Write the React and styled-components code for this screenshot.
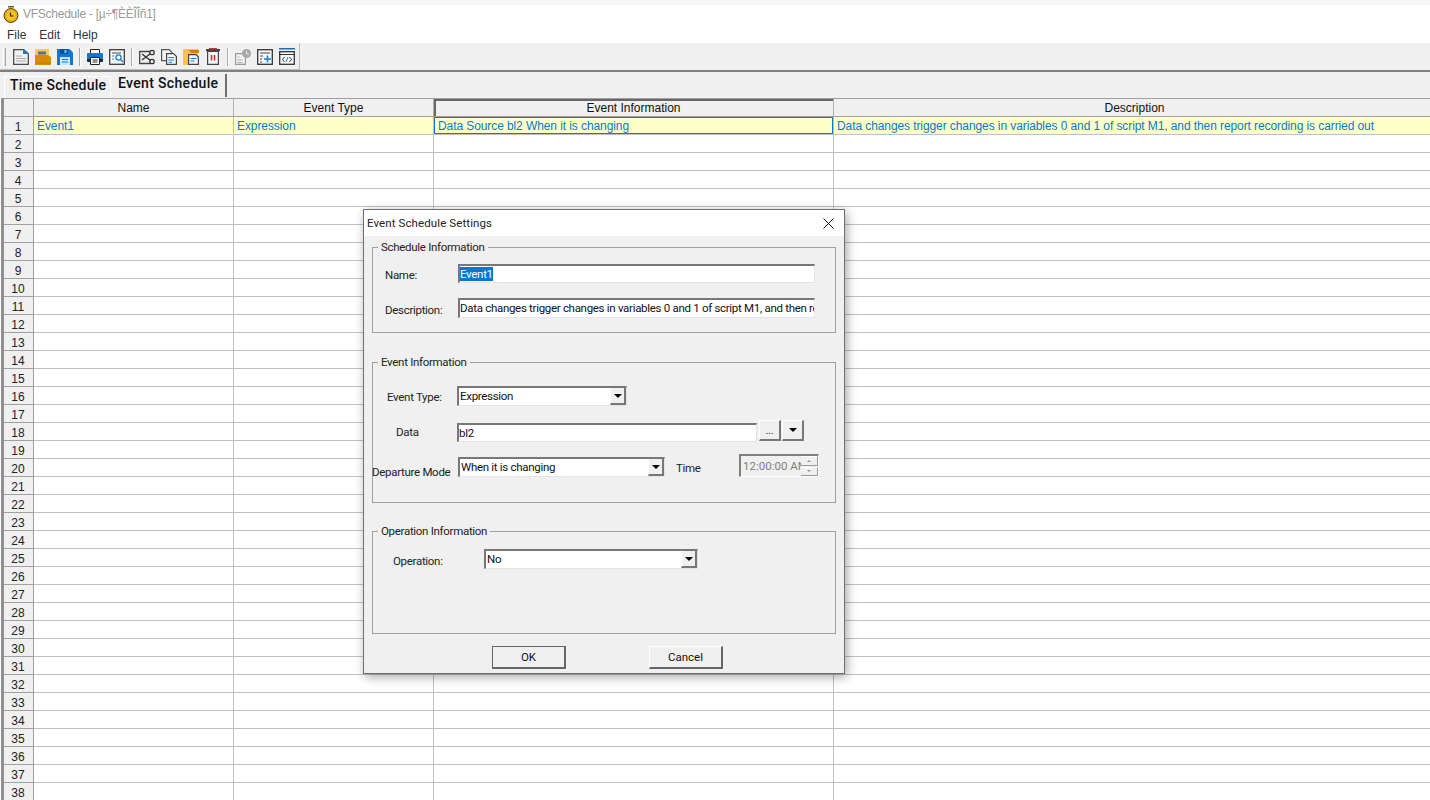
import React from 'react';
import styled, { createGlobalStyle } from 'styled-components';

const GlobalStyle = createGlobalStyle`
  html, body {
    margin: 0;
    padding: 0;
    background: #fff;
    overflow: hidden;
  }
  * {
    box-sizing: border-box;
  }
`;

const rows = Array.from({ length: 38 }, (_, i) => i + 1);

const firstRow = {
  name: 'Event1',
  type: 'Expression',
  info: 'Data Source bl2 When it is changing',
  description: 'Data changes trigger changes in variables 0 and 1 of script M1, and then report recording is carried out',
};

const AppClock = () => (
  <svg width="16" height="17" viewBox="0 0 16 17">
    <rect x="5" y="0" width="6" height="1.5" fill="#6b5a1e" />
    <circle cx="8" cy="9.5" r="7" fill="#e8a80c" stroke="#5a4a18" />
    <circle cx="8" cy="9.5" r="4.8" fill="#f6c52c" />
    <path d="M7.5 6.5v3.5h3" fill="none" stroke="#2b2b2b" strokeWidth="1.2" />
  </svg>
);

const NewIcon = () => (
  <svg width="16" height="17" viewBox="0 0 16 17">
    <path d="M.7 1.700h10l4.600 4v10.600H.7z" fill="#f2f2f2" stroke="#4a4a4a" strokeWidth="1.300" />
    <path d="M10 1l6 5h-6z" fill="#1a7fd0" />
    <path d="M3 8h6M3 10.500h10M3 13h10" stroke="#a8a8a8" strokeWidth="1.200" />
  </svg>
);

const OpenIcon = () => (
  <svg width="16" height="17" viewBox="0 0 16 17">
    <path d="M0 1h14v6H0z" fill="#f5cb55" />
    <rect x="3" y="3.500" width="8" height="3" fill="#4f7392" />
    <path d="M0 7h13l3 2v8H0z" fill="#d88a08" />
    <path d="M1 15h14" stroke="#c67a05" />
  </svg>
);

const SaveIcon = () => (
  <svg width="16" height="17" viewBox="0 0 16 17">
    <path d="M0 1h12.500L16 4.500V17H0z" fill="#0c78d8" />
    <rect x="3" y="1" width="8" height="5" fill="#0a4f94" />
    <rect x="7.500" y="2" width="2" height="3" fill="#8cc4f0" />
    <rect x="3" y="9" width="10" height="8" fill="#cfe4f6" />
    <path d="M5 11.500h6M5 14h6" stroke="#0c78d8" />
  </svg>
);

const PrintIcon = () => (
  <svg width="16" height="17" viewBox="0 0 16 17">
    <path d="M3.500 5.500V1.500h9v4" fill="#fff" stroke="#222" />
    <path d="M0 6a1 1 0 0 1 1-1h14a1 1 0 0 1 1 1v5H0z" fill="#0c78d8" />
    <path d="M0 11h16v2a1 1 0 0 1-1 1H1a1 1 0 0 1-1-1z" fill="#1c2a36" />
    <path d="M3.500 9.500h9v7h-9z" fill="#fff" stroke="#222" />
    <path d="M5.500 12h5M5.500 14h5" stroke="#222" />
  </svg>
);

const PreviewIcon = () => (
  <svg width="16" height="17" viewBox="0 0 16 17">
    <rect x=".7" y="1.700" width="14.600" height="14.600" fill="#f8f8f8" stroke="#3c3c3c" strokeWidth="1.300" />
    <path d="M3 5h9" stroke="#444" />
    <path d="M3 8h2M3 11h2" stroke="#2b8ad8" />
    <circle cx="9.500" cy="9.500" r="2.600" fill="#fff" stroke="#1a7fd0" strokeWidth="1.300" />
    <path d="M11.500 11.500l2.500 2.500" stroke="#1a7fd0" strokeWidth="1.500" />
  </svg>
);

const CutIcon = () => (
  <svg width="16" height="17" viewBox="0 0 16 17">
    <path d="M11 3.500H.7v12H11" fill="none" stroke="#444" strokeWidth="1.300" />
    <circle cx="13" cy="4.500" r="2.200" fill="#f0f0f0" stroke="#333" strokeWidth="1.300" />
    <circle cx="13" cy="13.500" r="2.200" fill="#f0f0f0" stroke="#333" strokeWidth="1.300" />
    <path d="M11.200 5.800L3 12M11.200 12.200L3 6" stroke="#333" strokeWidth="1.400" />
  </svg>
);

const CopyIcon = () => (
  <svg width="16" height="17" viewBox="0 0 16 17">
    <path d="M.6 1.600h7.500l3 3v8H.6z" fill="#f4f4f4" stroke="#555" strokeWidth="1.200" />
    <path d="M5.600 5.600h6.900l2.900 2.900v7.900H5.600z" fill="#fafafa" stroke="#444" strokeWidth="1.200" />
    <path d="M7.500 9.500h5.500M7.500 12h5.500M7.500 14.200h3.500" stroke="#1a7fd0" />
  </svg>
);

const PasteIcon = () => (
  <svg width="16" height="17" viewBox="0 0 16 17">
    <path d="M0 1h15v16H0z" fill="#f8c53a" />
    <path d="M6 2h10v3H8z" fill="#d57f14" />
    <path d="M5.600 6.600h7.400l2.400 2.400v7.400H5.600z" fill="#f8f8f8" stroke="#444" strokeWidth="1.200" />
    <path d="M7.500 10.500h6M7.500 13h4" stroke="#1a7fd0" />
  </svg>
);

const DeleteIcon = () => (
  <svg width="16" height="17" viewBox="0 0 16 17">
    <rect x="1" y="1" width="14" height="2.200" fill="#444" />
    <rect x="4" y="0" width="8" height="1.400" fill="#c23b3b" />
    <path d="M2.600 3.500h10.800v12.900H2.600z" fill="#f6f6f6" stroke="#444" strokeWidth="1.200" />
    <path d="M6.500 7v5.500M9.500 7v5.500" stroke="#c42b2b" strokeWidth="1.500" />
  </svg>
);

const ScheduleIcon = () => (
  <svg width="16" height="17" viewBox="0 0 16 17">
    <path d="M.6 5.600h9.800v10.800H.6z" fill="#f4f4f4" stroke="#999" strokeWidth="1.200" />
    <path d="M2.500 9h2M2.500 12h5M2.500 14.500h5" stroke="#aaa" />
    <circle cx="11.500" cy="5.500" r="4.500" fill="#a6a6a6" />
    <path d="M11.500 3v3h2.500" fill="none" stroke="#eee" />
  </svg>
);

const AddIcon = () => (
  <svg width="16" height="17" viewBox="0 0 16 17">
    <rect x=".7" y="1.700" width="14.600" height="14.600" fill="#f8f8f8" stroke="#333" strokeWidth="1.300" />
    <path d="M3 5h10M3 8h3M3 11h2M3 14h2" stroke="#444" />
    <path d="M7 11h7M10.500 7.500v7" stroke="#1a7fd0" strokeWidth="1.600" />
  </svg>
);

const CodeIcon = () => (
  <svg width="16" height="17" viewBox="0 0 16 17">
    <rect x="0" y="0" width="16" height="1.500" fill="#1a6fc0" />
    <rect x=".7" y="3.700" width="14.600" height="12.600" fill="#f8f8f8" stroke="#333" strokeWidth="1.300" />
    <path d="M.5 6.500h15" stroke="#333" />
    <path d="M5.500 9L3.500 11.500l2 2.500M10.500 9l2 2.500-2 2.500" fill="none" stroke="#333" />
    <path d="M9 9L7 14" stroke="#1a7fd0" />
  </svg>
);

const Arrow = () => <ArrowGlyph />;

const App = () => (
  <Page>
    <GlobalStyle />
    <TitleBar>
      <AppClock />
      <TitleText>VFSchedule - [µ÷¶ÈÈÎÎñ1]</TitleText>
    </TitleBar>
    <MenuBar>
      <MenuItem>File</MenuItem>
      <MenuItem>Edit</MenuItem>
      <MenuItem>Help</MenuItem>
    </MenuBar>
    <ToolbarStrip>
      <Toolbar>
        <Gripper />
        <ToolGroup>
          <NewIcon />
          <OpenIcon />
          <SaveIcon />
        </ToolGroup>
        <ToolSep />
        <ToolGroup>
          <PrintIcon />
          <PreviewIcon />
        </ToolGroup>
        <ToolSep />
        <ToolGroup>
          <CutIcon />
          <CopyIcon />
          <PasteIcon />
          <DeleteIcon />
        </ToolGroup>
        <ToolSep />
        <ToolGroup>
          <ScheduleIcon />
          <AddIcon />
          <CodeIcon />
        </ToolGroup>
      </Toolbar>
    </ToolbarStrip>
    <TabStrip>
      <Tab>Time Schedule</Tab>
      <Tab $active>Event Schedule</Tab>
    </TabStrip>
    <Sheet>
      <HeaderRow>
        <Corner />
        <HeaderCell>Name</HeaderCell>
        <HeaderCell>Event Type</HeaderCell>
        <HeaderCell $current>Event Information</HeaderCell>
        <HeaderCell>Description</HeaderCell>
      </HeaderRow>
      {rows.map((n) => {
        const data = n === 1 ? firstRow : {};
        return (
          <DataRow key={n}>
            <RowNumber>{n}</RowNumber>
            <Cell $filled={n === 1}>{data.name}</Cell>
            <Cell $filled={n === 1}>{data.type}</Cell>
            <Cell $filled={n === 1} $focused={n === 1}>{data.info}</Cell>
            <Cell $filled={n === 1}>{data.description}</Cell>
          </DataRow>
        );
      })}
    </Sheet>

    <Dialog>
      <DialogTitle>
        <span>Event Schedule Settings</span>
        <CloseIcon width="11" height="11" viewBox="0 0 11 11">
          <path d="M.5.5l10 10M10.500.5l-10 10" stroke="#111" strokeWidth="1" />
        </CloseIcon>
      </DialogTitle>
      <DialogBody>
        <Group $height={93} $gap={4}>
          <Legend>Schedule Information</Legend>
          <FormRow $top={10} $height={19}>
            <Label $left={12} $width={73} $down={1}>Name:</Label>
            <TextBox $width={357}><Selected>Event1</Selected></TextBox>
          </FormRow>
          <FormRow $top={15} $height={20}>
            <Label $left={12} $width={73} $down={2}>Description:</Label>
            <TextBox $width={357}>Data changes trigger changes in variables 0 and 1 of script M1, and then report recording is carried out</TextBox>
          </FormRow>
        </Group>

        <Group $height={148} $gap={22}>
          <Legend>Event Information</Legend>
          <FormRow $top={17} $height={20}>
            <Label $left={14} $width={70} $down={1}>Event Type:</Label>
            <Combo $width={170}>
              <ComboText>Expression</ComboText>
              <ComboButton><Arrow /></ComboButton>
            </Combo>
          </FormRow>
          <FormRow $top={14} $height={21}>
            <Label $left={23} $width={61} $down={2}>Data</Label>
            <TextBox $width={300} $height={19}>bl2</TextBox>
            <PickButton $left={2}>...</PickButton>
            <PickButton $left={1}><Arrow /></PickButton>
          </FormRow>
          <FormRow $top={13} $height={23}>
            <Label $left={-1} $width={86} $down={8}>Departure Mode</Label>
            <Combo $width={207} $height={20} $self="flex-end">
              <ComboText>When it is changing</ComboText>
              <ComboButton><Arrow /></ComboButton>
            </Combo>
            <Label $left={11} $width={63} $down={4}>Time</Label>
            <TimeBox>
              <TimeText>12:00:00 AM</TimeText>
              <Spinner>
                <SpinButton><SpinArrow $up /></SpinButton>
                <SpinButton><SpinArrow /></SpinButton>
              </Spinner>
            </TimeBox>
          </FormRow>
        </Group>

        <Group $height={110} $gap={21}>
          <Legend>Operation Information</Legend>
          <FormRow $top={11} $height={20}>
            <Label $left={20} $width={91} $down={2}>Operation:</Label>
            <Combo $width={214}>
              <ComboText>No</ComboText>
              <ComboButton><Arrow /></ComboButton>
            </Combo>
          </FormRow>
        </Group>

        <DialogFooter>
          <DialogButton $default>OK</DialogButton>
          <DialogButton>Cancel</DialogButton>
        </DialogFooter>
      </DialogBody>
    </Dialog>
  </Page>
);

const Page = styled.div`
  position: relative;
  width: 1430px;
  height: 800px;
  overflow: hidden;
  background: #fff;
  font-family: "Liberation Sans", Arial, sans-serif;
  font-size: 12px;
  color: #000;
`;

const TitleBar = styled.div`
  height: 24px;
  padding: 1px 0 0 3px;
  display: flex;
  align-items: flex-start;
  gap: 4px;
  border-top: 5px solid #f6f6f6;
`;

const TitleText = styled.span`
  font-size: 12px;
  line-height: 16px;
  letter-spacing: -0.25px;
  color: #999;
`;

const MenuBar = styled.div`
  height: 19px;
  padding: 2px 0 0 7px;
  display: flex;
  gap: 13px;
  align-items: center;
`;

const MenuItem = styled.span`
  font-size: 12px;
  color: #333;
`;

const ToolbarStrip = styled.div`
  height: 27px;
  background: #f0f0f0;
`;

const Toolbar = styled.div`
  width: 300px;
  height: 27px;
  padding: 5px 0 0 3px;
  display: flex;
  align-items: flex-start;
  border-right: 1px solid #bdbdbd;
  border-bottom: 1px solid #bdbdbd;
  background: #f0f0f0;
`;

const Gripper = styled.div`
  width: 3px;
  height: 18px;
  margin-right: 7px;
  border-left: 1px solid #fff;
  border-right: 1px solid #a8a8a8;
  background: #d8d8d8;
`;

const ToolGroup = styled.div`
  display: flex;
  gap: 6px;
  svg {
    display: block;
  }
`;

const ToolSep = styled.div`
  width: 2px;
  height: 18px;
  margin: 0 6px;
  background: #a8a8a8;
  border-right: 1px solid #fff;
`;

const TabStrip = styled.div`
  height: 28px;
  padding: 1px 0 0 4px;
  display: flex;
  align-items: flex-end;
  background: #f0f0f0;
  border-top: 2px solid #808080;
`;

const Tab = styled.div`
  font-family: Roboto, "Liberation Sans", sans-serif;
  font-weight: 500;
  font-size: 14px;
  line-height: 16px;
  letter-spacing: ${(p) => (p.$active ? '0.33px' : '0.25px')};
  color: #111;
  white-space: nowrap;
  height: ${(p) => (p.$active ? '23px' : '21px')};
  margin-bottom: 1px;
  padding: ${(p) => (p.$active ? '1px 7px 0 7px' : '0 4px 0 5px')};
  width: ${(p) => (p.$active ? '116px' : '107px')};
  border-right: ${(p) => (p.$active ? '2px solid #707070' : '1px solid #fff')};
  border-left: ${(p) => (p.$active ? 'none' : '1px solid #fff')};
  border-top: ${(p) => (p.$active ? 'none' : '1px solid #fff')};
`;

const Sheet = styled.div`
  border-left: 3px solid #909090;
  margin-left: 1px;
`;

const columns = '30px 200px 200px 400px 602px';

const HeaderRow = styled.div`
  display: grid;
  grid-template-columns: ${columns};
  height: 19px;
  background: #f0f0f0;
  border-top: 1px solid #a0a0a0;
  border-bottom: 1px solid #a0a0a0;
`;

const Corner = styled.div`
  border-right: 1px solid #a0a0a0;
`;

const HeaderCell = styled.div`
  height: 17px;
  text-align: center;
  line-height: 19px;
  color: #111;
  border-right: 1px solid #b0b0b0;
  ${(p) => p.$current && `
    box-shadow: inset 2px 2px 0 #666;
  `}
`;

const DataRow = styled.div`
  display: grid;
  grid-template-columns: ${columns};
  height: 18px;
`;

const RowNumber = styled.div`
  height: 18px;
  padding-right: 1px;
  background: #f0f0f0;
  border-right: 1px solid #a0a0a0;
  border-bottom: 1px solid #a0a0a0;
  text-align: center;
  line-height: 20px;
  color: #222;
`;

const Cell = styled.div`
  height: 18px;
  background: ${(p) => (p.$filled ? '#ffffc8' : '#fff')};
  color: #0a78d2;
  line-height: 19px;
  letter-spacing: -0.09px;
  padding-left: ${(p) => (p.$focused ? '4px' : '3px')};
  white-space: nowrap;
  border-right: 1px solid #c0c0c0;
  border-bottom: 1px solid #c0c0c0;
  ${(p) => p.$focused && `
    box-shadow: inset 0 0 0 1px #0a78d2;
  `}
`;

const Dialog = styled.div`
  position: absolute;
  left: 363px;
  top: 209px;
  width: 482px;
  height: 465px;
  background: #f0f0f0;
  border: 1px solid #6e6e6e;
  box-shadow: 2px 3px 10px rgba(0, 0, 0, 0.35);
  font-family: Roboto, "Liberation Sans", sans-serif;
  font-size: 11.5px;
  letter-spacing: -0.3px;
`;

const DialogTitle = styled.div`
  height: 26px;
  padding: 0 10px 0 3px;
  display: flex;
  align-items: center;
  justify-content: space-between;
  background: #fff;
  color: #222;
  font-size: 11.5px;
  letter-spacing: 0.1px;
`;

const CloseIcon = styled.svg`
  display: block;
`;

const DialogBody = styled.div`
  padding: 0 8px;
`;

const Group = styled.fieldset`
  margin: ${(p) => p.$gap}px 0 0;
  padding: 0;
  width: 464px;
  height: ${(p) => p.$height}px;
  border: 1px solid #a0a0a0;
  min-width: 0;
`;

const Legend = styled.legend`
  margin-left: 5px;
  padding: 1px 3px 0;
  line-height: 13px;
  color: #222;
`;

const FormRow = styled.div`
  display: flex;
  align-items: flex-start;
  height: ${(p) => p.$height}px;
  margin-top: ${(p) => p.$top}px;
`;

const Label = styled.div`
  width: ${(p) => p.$width}px;
  margin-left: ${(p) => p.$left}px;
  padding-top: ${(p) => (p.$down || 0) + 3}px;
  line-height: 14px;
  color: #222;
  white-space: nowrap;
`;

const TextBox = styled.div`
  width: ${(p) => p.$width}px;
  height: ${(p) => (p.$height ? `${p.$height}px` : '100%')};
  margin-top: ${(p) => (p.$height ? '3px' : '0')};
  padding: 1px 0 0;
  background: #fff;
  border-top: 2px solid #777;
  border-left: 2px solid #777;
  border-right: 1px solid #e4e4e4;
  border-bottom: 1px solid #e4e4e4;
  line-height: 15px;
  color: #111;
  white-space: nowrap;
  overflow: hidden;
`;

const Selected = styled.span`
  background: #0078d7;
  color: #fff;
`;

const Combo = styled.div`
  width: ${(p) => p.$width}px;
  height: ${(p) => (p.$height ? `${p.$height}px` : '100%')};
  align-self: ${(p) => p.$self || 'flex-start'};
  display: flex;
  background: #fff;
  border-top: 2px solid #777;
  border-left: 2px solid #777;
  border-right: 1px solid #e4e4e4;
  border-bottom: 1px solid #e4e4e4;
`;

const ComboText = styled.div`
  flex: 1;
  padding: 1px 0 0 1px;
  line-height: 15px;
  color: #111;
`;

const ComboButton = styled.div`
  width: 16px;
  display: flex;
  align-items: center;
  justify-content: center;
  background: #f0f0f0;
  border-left: 1px solid #fff;
  border-right: 2px solid #777;
  border-bottom: 2px solid #777;
`;

const ArrowGlyph = styled.div`
  width: 0;
  height: 0;
  border-left: 4px solid transparent;
  border-right: 4px solid transparent;
  border-top: 4px solid #000;
`;

const PickButton = styled.div`
  width: 22px;
  height: 21px;
  margin-left: ${(p) => p.$left || 0}px;
  display: flex;
  align-items: center;
  justify-content: center;
  background: #f0f0f0;
  border-top: 1px solid #fff;
  border-left: 1px solid #fff;
  border-right: 2px solid #777;
  border-bottom: 2px solid #777;
  color: #333;
`;

const TimeBox = styled.div`
  width: 80px;
  height: 23px;
  display: flex;
  background: #f0f0f0;
  border-top: 2px solid #808080;
  border-left: 2px solid #808080;
  border-right: 1px solid #fff;
  border-bottom: 1px solid #fff;
`;

const TimeText = styled.div`
  width: 60px;
  padding: 2px 0 0 2px;
  line-height: 16px;
  color: #808080;
  letter-spacing: 0;
  white-space: nowrap;
  overflow: hidden;
`;

const Spinner = styled.div`
  flex: 1;
  display: grid;
  grid-template-rows: 1fr 1fr;
  gap: 1px;
`;

const SpinButton = styled.div`
  display: flex;
  align-items: center;
  justify-content: center;
  background: #f0f0f0;
  border-top: 1px solid #fff;
  border-right: 1px solid #999;
  border-bottom: 1px solid #999;
`;

const SpinArrow = styled.div`
  width: 0;
  height: 0;
  border-left: 2px solid transparent;
  border-right: 2px solid transparent;
  ${(p) => (p.$up ? 'border-bottom: 2px solid #999;' : 'border-top: 2px solid #999;')}
`;

const DialogFooter = styled.div`
  display: flex;
  gap: 83px;
  margin: 12px 0 0 120px;
`;

const DialogButton = styled.div`
  width: 74px;
  height: 23px;
  line-height: 20px;
  text-align: center;
  color: #111;
  letter-spacing: 0;
  background: #f0f0f0;
  border-top: 1px solid ${(p) => (p.$default ? '#666' : '#fff')};
  border-left: 1px solid ${(p) => (p.$default ? '#666' : '#fff')};
  border-right: 2px solid #666;
  border-bottom: 2px solid #666;
`;

export default App;
